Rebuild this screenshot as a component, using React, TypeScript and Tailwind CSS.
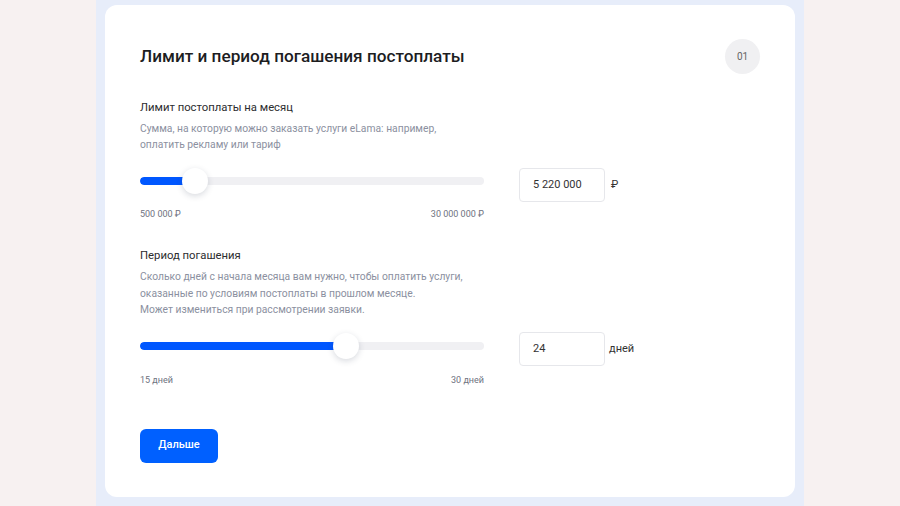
import React from "react";

function Slider({ pct }: { pct: number }) {
  return (
    <div className="relative h-[26px] w-[344px] flex items-center">
      <div className="h-[8px] w-full rounded-full bg-[#f0f0f3] overflow-hidden">
        <div className="h-full rounded-full bg-[#0057ff]" style={{ width: `${pct}%` }} />
      </div>
      <div
        className="absolute top-0 h-[26px] w-[26px] rounded-full bg-white shadow-[0_2px_6px_rgba(40,50,80,0.18)]"
        style={{ left: `calc(${pct}% - 13px)` }}
      />
    </div>
  );
}

export default function App() {
  return (
    <div className="min-h-[506px] w-full bg-[#f7f1f1] flex justify-center" style={{ fontFamily: "Roboto, 'Noto Sans', sans-serif" }}>
      <div className="w-[708px] bg-[#e7edfa] pt-[5px] px-[9px] pb-[9px]">
        <div className="h-[492px] rounded-[12px] bg-white pl-[35px] pr-[35px] pt-[33px]">
          <div className="flex items-center justify-between">
            <h1 className="text-[17.2px] font-medium text-[#1d1d1f] leading-[36px]">
              Лимит и период погашения постоплаты
            </h1>
            <div className="h-[35px] w-[35px] rounded-full bg-[#f0f0f2] flex items-center justify-center text-[10px] text-[#666]">
              01
            </div>
          </div>

          <div className="mt-[26px] flex">
            <div className="w-[344px]">
              <div className="text-[11.3px] text-[#2c2c2e] leading-[16px]">Лимит постоплаты на месяц</div>
              <div className="mt-[5px] text-[10.3px] text-[#8b90a0] leading-[16px]">
                Сумма, на которую можно заказать услуги eLama: например,
                <br />
                оплатить рекламу или тариф
              </div>
              <div className="mt-[15px]">
                <Slider pct={16} />
              </div>
              <div className="mt-[14px] flex justify-between text-[9px] text-[#6e7280] leading-[12px]">
                <span>500 000 ₽</span>
                <span>30 000 000 ₽</span>
              </div>
            </div>
            <div className="ml-[35px] mt-[68px] flex items-center h-[34px]">
              <div className="h-[34px] w-[86px] rounded-[4px] border border-[#e6e7eb] flex items-center pl-[13px] text-[11px] text-[#333]">
                5 220 000
              </div>
              <span className="ml-[6px] text-[11px] text-[#333]">₽</span>
            </div>
          </div>

          <div className="mt-[28px] flex">
            <div className="w-[344px]">
              <div className="text-[11.3px] text-[#2c2c2e] leading-[16px]">Период погашения</div>
              <div className="mt-[5px] text-[10.3px] text-[#8b90a0] leading-[16.5px]">
                Сколько дней с начала месяца вам нужно, чтобы оплатить услуги,
                <br />
                оказанные по условиям постоплаты в прошлом месяце.
                <br />
                Может измениться при рассмотрении заявки.
              </div>
              <div className="mt-[14px]">
                <Slider pct={60} />
              </div>
              <div className="mt-[15px] flex justify-between text-[9px] text-[#6e7280] leading-[12px]">
                <span>15 дней</span>
                <span>30 дней</span>
              </div>
            </div>
            <div className="ml-[35px] mt-[84px] flex items-center h-[34px]">
              <div className="h-[34px] w-[86px] rounded-[4px] border border-[#e6e7eb] flex items-center pl-[13px] text-[11px] text-[#333]">
                24
              </div>
              <span className="ml-[4px] text-[11px] text-[#333]">дней</span>
            </div>
          </div>

          <button className="mt-[43px] h-[34px] w-[78px] rounded-[6px] bg-[#0060ff] text-white text-[11px] font-medium">
            Дальше
          </button>
        </div>
      </div>
    </div>
  );
}
